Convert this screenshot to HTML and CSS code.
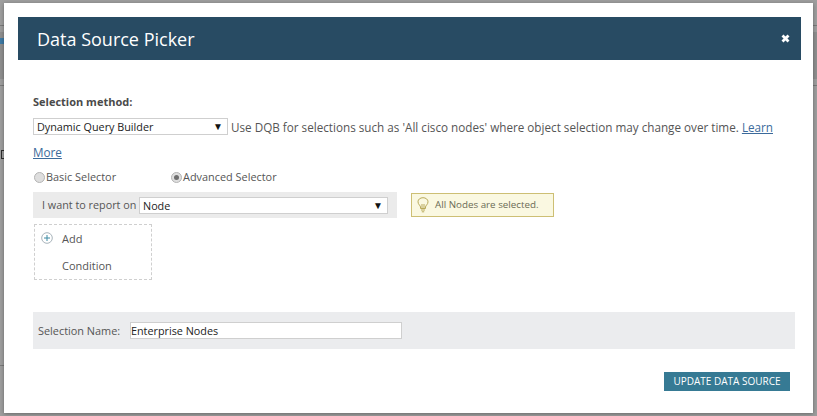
FILE: index.html
```html
<!DOCTYPE html>
<html lang="en">
<head>
<meta charset="utf-8">
<title>Data Source Picker</title>
<link rel="stylesheet" href="styles.css">
</head>
<body>
<div class="backdrop-band"></div>
<div class="backdrop-chip"></div>
<div class="backdrop-box"></div>
<div class="backdrop-line line-a"></div>
<div class="backdrop-line line-b"></div>
<div class="backdrop-line line-c"></div>
<main class="modal">
  <header class="modal-head">
    <h1>Data Source Picker</h1>
    <svg class="close" width="9" height="9" viewBox="0 0 9 9" aria-label="Close"><path d="M1.5 1.5 7.500 7.500M7.500 1.500 1.500 7.500" stroke="#fff" stroke-width="2.800"/></svg>
  </header>
  <section class="content">
    <div class="label-strong">Selection method:</div>
    <div class="method">
      <span class="select method-select">Dynamic Query Builder<i class="arrow">▼</i></span>
      <span class="method-note">Use DQB for selections such as 'All cisco nodes' where object selection may change over time. <a href="#">Learn</a></span>
    </div>
    <div class="method-more"><a href="#">More</a></div>
    <div class="radios">
      <label class="radio-item basic"><span class="radio"></span>Basic Selector</label>
      <label class="radio-item"><span class="radio on"></span>Advanced Selector</label>
    </div>
    <div class="report-row">
      <div class="report">
        <span class="report-label">I want to report on</span>
        <span class="select report-select">Node<i class="arrow">▼</i></span>
      </div>
      <div class="hint">
        <svg width="12" height="16" viewBox="0 0 12 16" fill="none" stroke="#b8a95a" stroke-width="1"><path d="M3.500 11.500V10C3.500 8.500 1 7.500 1 4.800 1 2.400 3.200.7 6 .7s5 1.700 5 4.100C11 7.500 8.500 8.500 8.500 10v1.500ZM5 11V7M7 11V7M4 13h4M4.800 14.800h2.400"/></svg>
        <span>All Nodes are selected.</span>
      </div>
    </div>
    <div class="add-box">
      <svg class="plus" width="12" height="12" viewBox="0 0 12 12" fill="none"><circle cx="6" cy="6" r="5.300" stroke="#a9b4bb"/><path d="M6 3v6M3 6h6" stroke="#3d8aa3"/></svg>
      <span class="add-text">Add<br>Condition</span>
    </div>
    <div class="name-band">
      <label>Selection Name:</label>
      <span class="name-input">Enterprise Nodes</span>
    </div>
    <div class="actions"><button type="button">UPDATE DATA SOURCE</button></div>
  </section>
</main>
</body>
</html>
```
FILE: styles.css
```css
* { box-sizing: border-box; }
html, body { margin: 0; height: 416px; overflow: hidden; }
body {
  background: #9e9e9e;
  padding: 3px 4px;
  font: 11px/16px "Open Sans", sans-serif;
  color: #555;
  position: relative;
}
.backdrop-band { position: absolute; left: 0; right: 0; top: 32px; height: 47px; background: #8f8f8f; }
.backdrop-chip { position: absolute; left: 0; top: 38px; width: 4px; height: 6px; background: #3f7ba6; }
.backdrop-box { position: absolute; left: 1px; top: 150px; width: 3px; height: 9px; border: 1px solid #2c2c2c; border-right: 0; }
.backdrop-line { position: absolute; background: #7a7a7a; height: 1px; }
.line-a { left: 0; right: 0; top: 25px; }
.line-b { left: 0; right: 0; top: 85px; }
.line-c { left: 0; width: 4px; top: 365px; }
.modal {
  width: 809px;
  height: 410px;
  background: #fff;
  padding: 14px;
  position: relative;
  box-shadow: 0 1px 4px rgba(0, 0, 0, .35);
}
.modal-head {
  width: 783px;
  height: 43px;
  background: #284b63;
  color: #fff;
  display: flex;
  align-items: center;
  justify-content: space-between;
  padding: 0 11px 0 19px;
}
.modal-head h1 { margin: 0; font-size: 18px; font-weight: 400; line-height: 24px; }
.content { padding: 34px 0 0 15px; }
.label-strong { font-weight: 700; font-size: 11px; line-height: 16px; color: #4a4a4a; }
.method {
  margin: 3px 0 0;
  height: 27px;
  display: flex;
  align-items: center;
  gap: 3px;
  white-space: nowrap;
  font-size: 11.7px;
}
.method-more { height: 25px; line-height: 25px; font-size: 11.7px; }
.method a, .method-more a { color: #3b6a9b; text-decoration: underline; }
.select {
  display: inline-block;
  position: relative;
  background: #fff;
  border: 1px solid #cfcfcf;
  height: 17px;
  font-size: 10.8px;
  line-height: 15px;
  padding-left: 3px;
  color: #222;
}
.method-select { width: 195px; }
.arrow {
  position: absolute;
  right: 4px;
  top: 0;
  font-style: normal;
  font-size: 10px;
  line-height: 14px;
  color: #111;
}
.radios { display: flex; margin-top: 4px; height: 16px; line-height: 16px; font-size: 10.9px; }
.radio-item { display: flex; align-items: center; }
.basic { width: 137px; }
.radio {
  width: 11px;
  height: 11px;
  border-radius: 50%;
  background: #dedede;
  border: 1px solid #b4b4b4;
  margin: 0 1px 0 1px;
  position: relative;
}
.radio.on::after {
  content: "";
  position: absolute;
  left: 2px;
  top: 2px;
  width: 5px;
  height: 5px;
  border-radius: 50%;
  background: #6e6e6e;
}
.report-row { display: flex; align-items: center; margin-top: 7px; }
.report {
  width: 364px;
  height: 26px;
  background: #ebebeb;
  display: flex;
  align-items: center;
  padding-left: 9px;
}
.report-label { width: 97px; font-size: 10.8px; }
.report-select { width: 249px; padding-left: 3px; }
.hint {
  width: 143px;
  height: 24px;
  margin-left: 14px;
  background: #faf8e1;
  border: 1px solid #cdbf74;
  display: flex;
  align-items: center;
  gap: 6px;
  padding-left: 5px;
  font-size: 9.8px;
  color: #6b6b55;
}
.add-box {
  width: 118px;
  height: 56px;
  margin: 6px 0 0 1px;
  border: 1px dashed #cfcfcf;
  display: flex;
  padding: 0 6px;
}
.plus { margin-top: 7px; flex: none; }
.add-text { margin-left: 9px; line-height: 27px; }
.name-band {
  width: 762px;
  height: 37px;
  margin-top: 32px;
  background: #ebecee;
  display: flex;
  align-items: center;
  padding-left: 5px;
  font-size: 10.9px;
}
.name-band label { width: 92px; }
.name-input {
  width: 272px;
  height: 17px;
  background: #fff;
  border: 1px solid #cfcfcf;
  font-size: 10.8px;
  line-height: 15px;
  padding-left: 0;
  color: #222;
}
.actions { width: 757px; display: flex; justify-content: flex-end; margin-top: 23px; }
button {
  width: 126px;
  height: 19px;
  border: 0;
  padding: 0;
  background: #367a94;
  color: #fff;
  font: 10px/19px "Open Sans", sans-serif;
}
```
